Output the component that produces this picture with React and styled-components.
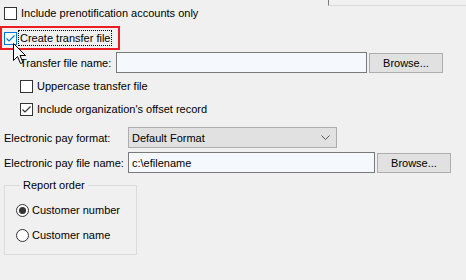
import React from 'react'
import styled, { createGlobalStyle } from 'styled-components'

const GlobalStyle = createGlobalStyle`
  html, body {
    margin: 0;
    padding: 0;
    background: #f0f0f0;
  }
  body {
    font-family: "Liberation Sans", Arial, sans-serif;
    font-size: 11px;
    color: #000;
  }
`

const Page = styled.div`
  position: relative;
  width: 466px;
  height: 280px;
  overflow: hidden;
  background: #f0f0f0;
`

const ScrolledBox = styled.div`
  margin-left: 328px;
  height: 5px;
  border-left: 1px solid #7a7a7a;
  border-bottom: 1px solid #dadada;
`

const Row = styled.div`
  display: flex;
  align-items: center;
  height: ${p => p.h || 13}px;
  margin-top: ${p => p.top || 0}px;
  padding-left: ${p => p.indent || 4}px;
`

const Highlight = styled.div`
  display: flex;
  align-items: center;
  width: 114px;
  height: 20px;
  margin-top: 6px;
  border: 2px solid #ec1c24;
  padding-left: 2px;
`

const Box = styled.span`
  box-sizing: border-box;
  width: 13px;
  height: 13px;
  flex: none;
  border: 1px solid ${p => (p.focus ? '#0078d7' : '#333')};
  background: #fff;
  display: flex;
  align-items: center;
  justify-content: center;
`

const Label = styled.span`
  margin-left: ${p => p.gap ?? 4}px;
  white-space: nowrap;
  line-height: 13px;
`

const FocusLabel = styled.span`
  margin-left: 2px;
  padding: 0 1px;
  line-height: 14px;
  outline: 1px dotted #000;
  white-space: nowrap;
`

const FieldLabel = styled.span`
  width: ${p => p.w}px;
  flex: none;
  white-space: nowrap;
`

const TextBox = styled.div`
  box-sizing: border-box;
  width: ${p => p.w}px;
  height: 21px;
  border: 1px solid #7a7a7a;
  background: #f5f8fc;
  padding-left: 3px;
  display: flex;
  align-items: center;
`

const Button = styled.div`
  box-sizing: border-box;
  width: 74px;
  height: 20px;
  margin-left: 2px;
  align-self: flex-end;
  border: 1px solid #adadad;
  background: #e1e1e1;
  display: flex;
  align-items: center;
  justify-content: center;
`

const Combo = styled.div`
  box-sizing: border-box;
  width: 209px;
  height: 21px;
  border: 1px solid #adadad;
  background: #e1e1e1;
  padding: 0 6px 0 3px;
  display: flex;
  align-items: center;
  justify-content: space-between;
`

const Group = styled.fieldset`
  box-sizing: border-box;
  width: 133px;
  height: 76px;
  margin: 6px 0 0 4px;
  padding: 11px 0 0 11px;
  border: 1px solid #dcdcdc;
  display: flex;
  flex-direction: column;
  gap: 11px;
  legend {
    padding: 0 3px;
    margin-left: 4px;
    line-height: 13px;
  }
`

const RadioRow = styled.div`
  display: flex;
  align-items: center;
  height: 14px;
`

const Radio = styled.span`
  box-sizing: border-box;
  width: 13px;
  height: 13px;
  border-radius: 50%;
  border: 1px solid #333;
  background: #fff;
  display: flex;
  align-items: center;
  justify-content: center;
  &::after {
    content: '';
    width: 7px;
    height: 7px;
    border-radius: 50%;
    background: ${p => (p.on ? '#333' : 'transparent')};
  }
`

const Cursor = styled.svg`
  position: absolute;
  left: 13px;
  top: 43px;
`

const Check = ({ color }) => (
  <svg width="11" height="11" viewBox="0 0 11 11">
    <path d="M1.5 5.5 L4 8 L9.5 2.5" fill="none" stroke={color} strokeWidth="1.2" />
  </svg>
)

const CheckBox = ({ checked, focus }) => (
  <Box focus={focus}>{checked && <Check color={focus ? '#0078d7' : '#333'} />}</Box>
)

const App = () => (
  <Page>
    <GlobalStyle />
    <ScrolledBox />
    <Row top={1}>
      <CheckBox />
      <Label>Include prenotification accounts only</Label>
    </Row>
    <Highlight>
      <CheckBox checked focus />
      <FocusLabel>Create transfer file</FocusLabel>
    </Highlight>
    <Row h={21} top={2} indent={20}>
      <FieldLabel w={96}>Transfer file name:</FieldLabel>
      <TextBox w={251} />
      <Button>Browse...</Button>
    </Row>
    <Row top={7} indent={20}>
      <CheckBox />
      <Label>Uppercase transfer file</Label>
    </Row>
    <Row top={10} indent={20}>
      <CheckBox checked />
      <Label>Include organization's offset record</Label>
    </Row>
    <Row h={21} top={11}>
      <FieldLabel w={124}>Electronic pay format:</FieldLabel>
      <Combo>
        <span>Default Format</span>
        <svg width="9" height="5" viewBox="0 0 9 5">
          <path d="M0.5 0.5 L4.5 4.5 L8.5 0.5" fill="none" stroke="#555" strokeWidth="1" />
        </svg>
      </Combo>
    </Row>
    <Row h={21} top={4}>
      <FieldLabel w={124}>Electronic pay file name:</FieldLabel>
      <TextBox w={247}>c:\efilename</TextBox>
      <Button>Browse...</Button>
    </Row>
    <Group>
      <legend>Report order</legend>
      <RadioRow>
        <Radio on />
        <Label gap={3}>Customer number</Label>
      </RadioRow>
      <RadioRow>
        <Radio />
        <Label gap={3}>Customer name</Label>
      </RadioRow>
    </Group>
    <Cursor width="14" height="23" viewBox="0 0 14 23">
      <path
        d="M0.5 0.5 L0.5 17.5 L4.5 13.5 L7.5 20.5 L10 19.5 L7 12.5 L12.5 12.5 Z"
        fill="#fff"
        stroke="#000"
        strokeWidth="1"
      />
    </Cursor>
  </Page>
)

export default App
